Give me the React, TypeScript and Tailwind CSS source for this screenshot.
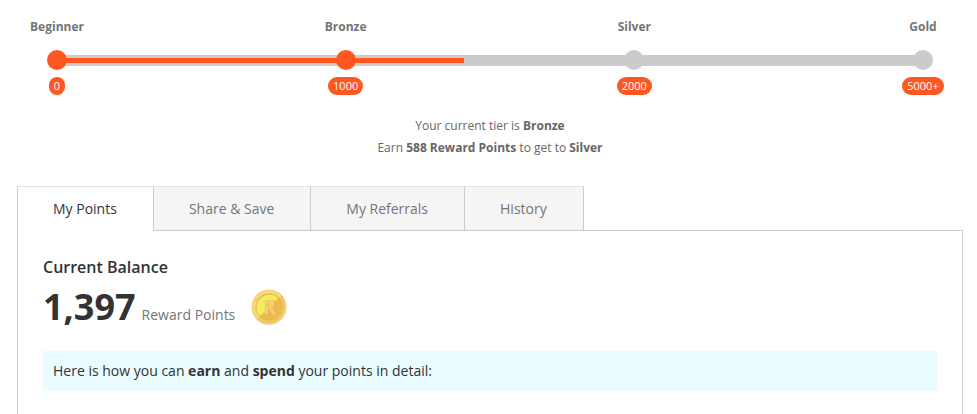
import { useState } from "react";
import clsx from "clsx";

interface Tier {
  name: string;
  label: string;
  reached: boolean;
}

const TIERS: Tier[] = [
  { name: "Beginner", label: "0", reached: true },
  { name: "Bronze", label: "1000", reached: true },
  { name: "Silver", label: "2000", reached: false },
  { name: "Gold", label: "5000+", reached: false },
];

const TABS = ["My Points", "Share & Save", "My Referrals", "History"];

function TierProgress({ percent }: { percent: number }) {
  return (
    <div className="relative px-2.5">
      {/* Track, runs between the centres of the first and last dot */}
      <div className="absolute inset-x-10 top-[37px] flex h-[11px] items-center bg-[#cbcbcb]">
        <div className="h-[5px] bg-[#ff5722]" style={{ width: `${percent}%` }} />
      </div>

      <ol className="relative flex justify-between">
        {TIERS.map((tier) => (
          <li key={tier.name} className="flex w-[60px] flex-col items-center">
            <span className="text-[12px] font-bold leading-[18px] text-[#757575]">{tier.name}</span>
            <span
              className={clsx(
                "mt-3.5 size-5 rounded-full",
                tier.reached ? "bg-[#ff5722]" : "bg-[#cbcbcb]"
              )}
            />
            <span className="mt-[7px] rounded-full bg-[#ff5722] px-[5px] text-[11px] leading-[18px] text-white">
              {tier.label}
            </span>
          </li>
        ))}
      </ol>
    </div>
  );
}

function Coin() {
  return (
    <svg width="36" height="36" viewBox="0 0 36 36" aria-hidden="true">
      <defs>
        <clipPath id="coin-face">
          <circle cx="18" cy="18" r="13.4" />
        </clipPath>
      </defs>
      <circle cx="18" cy="18.3" r="17.4" fill="#e3c48a" />
      <circle cx="18" cy="17.8" r="17.3" fill="#f8d67c" />
      <path d="M30.2 5.6A17.3 17.3 0 0 1 5.8 30Z" fill="#f3c75f" />
      <g clipPath="url(#coin-face)">
        <rect width="36" height="36" fill="#e6c04f" />
        <circle cx="18.4" cy="18.8" r="13" fill="#f2ef5e" />
        <path d="M36 0V36H0Z" fill="#eabc4e" />
        <circle cx="18" cy="18" r="13.2" fill="none" stroke="#e0b24c" strokeWidth="0.6" />
      </g>
      <text x="19.4" y="25.2" textAnchor="middle" fontSize="19" fontWeight="800" fill="#dfa345">
        R
      </text>
      <text x="18.6" y="24.6" textAnchor="middle" fontSize="19" fontWeight="800" fill="#f8cb74">
        R
      </text>
    </svg>
  );
}

export default function App() {
  const [active, setActive] = useState(TABS[0]);

  return (
    <main className="flex min-h-screen flex-col bg-white pl-[17px] pr-3.5 pt-[18px] font-['Open_Sans',sans-serif]">
      <TierProgress percent={47} />

      <div className="mt-5 text-center text-[12px] leading-[22px] text-[#666]">
        <p>
          Your current tier is <b>Bronze</b>
        </p>
        <p>
          Earn <b>588 Reward Points</b> to get to <b>Silver</b>
        </p>
      </div>

      <div role="tablist" className="mt-[27px] flex">
        {TABS.map((tab) => (
          <button
            key={tab}
            role="tab"
            aria-selected={tab === active}
            onClick={() => setActive(tab)}
            className={clsx(
              "relative -mb-px h-[45px] border border-l-0 border-[#ccc] border-t-[#e4e4e4] pl-[35px] pr-9 pt-px text-[14px] leading-5 first:border-l",
              tab === active ? "z-10 border-b-0 bg-white pb-px text-[#333]" : "bg-[#f5f5f5] text-[#757575]"
            )}
          >
            {tab}
          </button>
        ))}
      </div>

      <section
        role="tabpanel"
        aria-label={active}
        className="flex-1 border border-b-0 border-[#ccc] px-[25px] pb-3 pt-6"
      >
        <h2 className="text-[16px] font-semibold leading-6 text-[#333]">Current Balance</h2>
        <div className="flex items-center gap-4">
          <p className="flex items-baseline gap-1.5 text-[14px] leading-5 text-[#757575]">
            <strong className="text-[36px] font-bold leading-14 text-[#333]">1,397</strong>
            Reward Points
          </p>
          <Coin />
        </div>
        <p className="mt-4 bg-[#eafcff] px-2.5 py-2.5 text-[14px] leading-5 text-[#333]">
          Here is how you can <b>earn</b> and <b>spend</b> your points in detail:
        </p>
      </section>
    </main>
  );
}
